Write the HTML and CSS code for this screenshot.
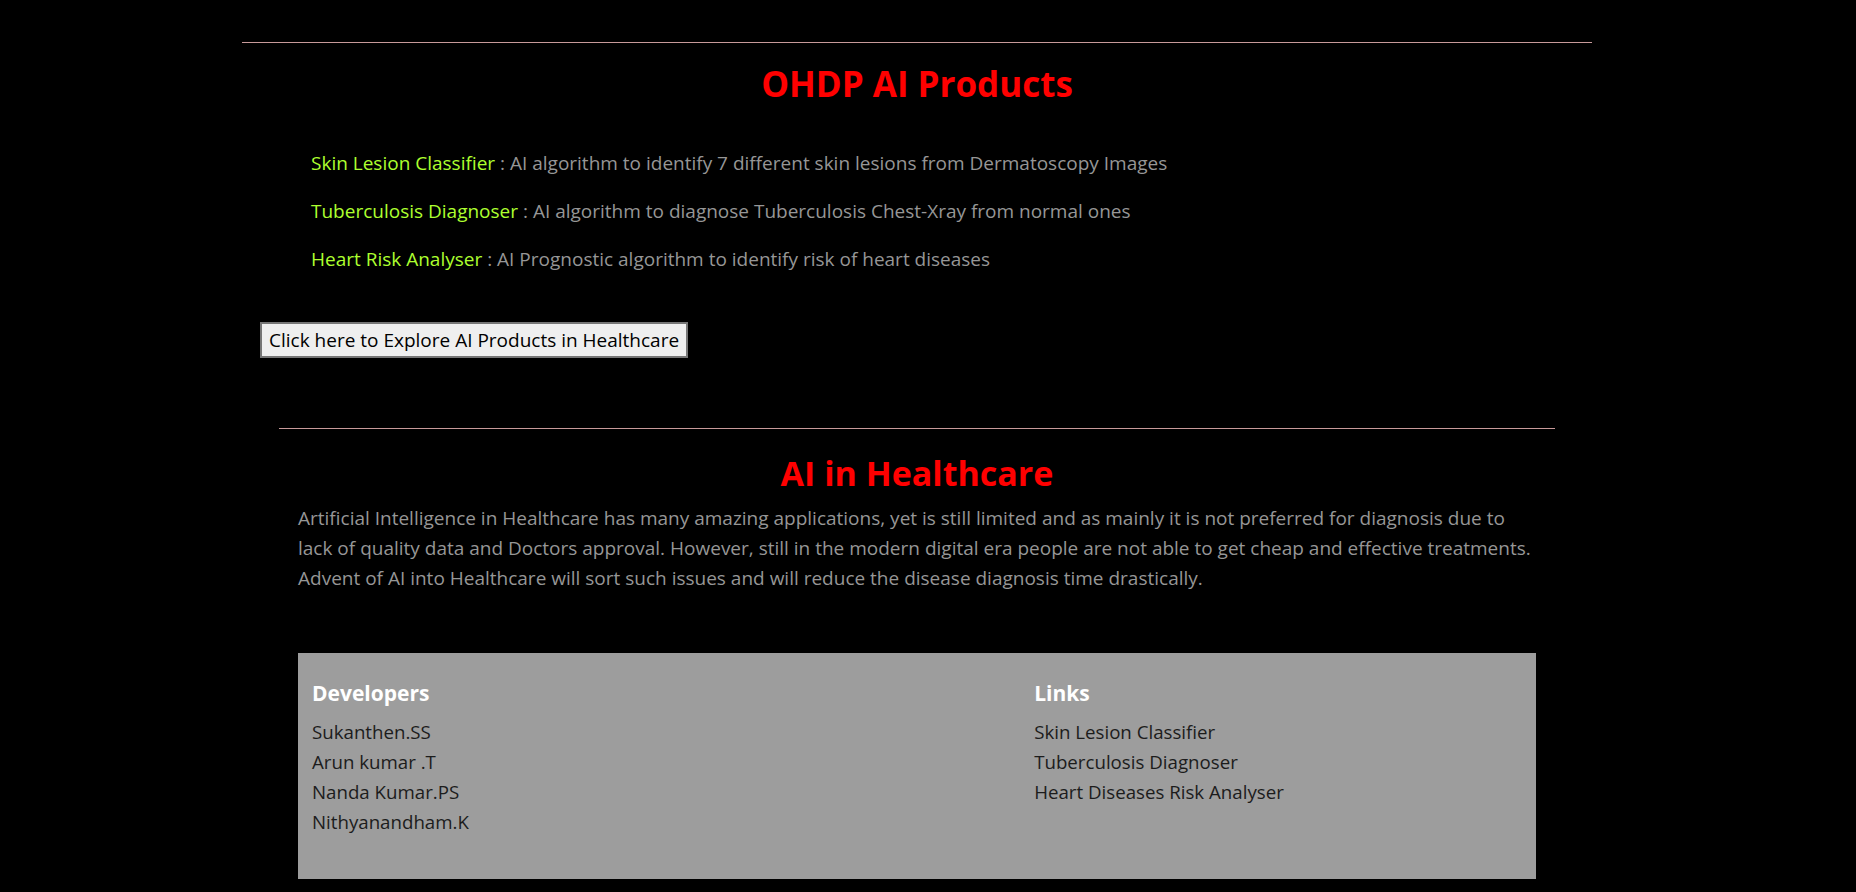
FILE: index.html
```html
<!DOCTYPE html>
<html lang="en">
<head>
<meta charset="utf-8">
<title>OHDP AI Products</title>
<link rel="stylesheet" href="styles.css">
</head>
<body>
<main class="page">
  <section class="products">
    <hr class="rule">
    <h1 class="title">OHDP AI Products</h1>
    <ul class="product-list">
      <li><span class="product-name">Skin Lesion Classifier</span> : AI algorithm to identify 7 different skin lesions from Dermatoscopy Images</li>
      <li><span class="product-name">Tuberculosis Diagnoser</span> : AI algorithm to diagnose Tuberculosis Chest-Xray from normal ones</li>
      <li><span class="product-name">Heart Risk Analyser</span> : AI Prognostic algorithm to identify risk of heart diseases</li>
    </ul>
    <button class="explore-btn" type="button">Click here to Explore AI Products in Healthcare</button>
  </section>

  <section class="about">
    <hr class="rule">
    <h1 class="title title-lg">AI in Healthcare</h1>
    <p class="about-text">Artificial Intelligence in Healthcare has many amazing applications, yet is still limited and as mainly it is not preferred for diagnosis due to<br>lack of quality data and Doctors approval. However, still in the modern digital era people are not able to get cheap and effective treatments.<br>Advent of AI into Healthcare will sort such issues and will reduce the disease diagnosis time drastically.</p>

    <footer class="footer">
      <div class="footer-col footer-col-wide">
        <h3 class="footer-heading">Developers</h3>
        <ul class="footer-list">
          <li>Sukanthen.SS</li>
          <li>Arun kumar .T</li>
          <li>Nanda Kumar.PS</li>
          <li>Nithyanandham.K</li>
        </ul>
      </div>
      <div class="footer-col">
        <h3 class="footer-heading">Links</h3>
        <ul class="footer-list">
          <li>Skin Lesion Classifier</li>
          <li>Tuberculosis Diagnoser</li>
          <li>Heart Diseases Risk Analyser</li>
        </ul>
      </div>
    </footer>
  </section>
</main>
</body>
</html>
```
FILE: styles.css
```css
html, body {
  margin: 0;
  padding: 0;
  background: #000;
}

body {
  font-family: "Open Sans", "Noto Sans", sans-serif;
  color: #969696;
}

.page {
  width: 1350px;
  margin-left: 242px;
  padding-top: 42px;
}

.rule {
  margin: 0;
  border: 0;
  border-top: 1px solid #c89a9a;
  height: 0;
}

.title {
  margin: 21px 0 0;
  text-align: center;
  color: #f00;
  font-size: 35px;
  line-height: 40px;
  font-weight: 700;
}

.product-list {
  list-style: none;
  margin: 45px 0 0;
  padding: 0 0 0 69px;
  display: flex;
  flex-direction: column;
  gap: 20px;
  font-size: 19px;
  line-height: 28px;
}

.product-name {
  color: #adff2f;
}

.explore-btn {
  display: block;
  margin: 49px 0 0 18px;
  height: 36px;
  padding: 0 7px;
  background: #efefef;
  border: 2px solid #767676;
  border-radius: 0;
  color: #000;
  font-family: "Open Sans", "Noto Sans", sans-serif;
  font-size: 19px;
}

.about {
  margin: 70px 37px 0;
}

.title-lg {
  margin-top: 22px;
  font-size: 34px;
  line-height: 44px;
}

.about-text {
  margin: 8px 0 0 19px;
  font-size: 19px;
  line-height: 30px;
}

.footer {
  margin: 60px 19px 0;
  background: #9d9d9d;
  display: grid;
  grid-template-columns: 7fr 5fr;
  padding: 26px 0 42px;
}

.footer-col {
  padding: 0 14px;
}

.footer-heading {
  margin: 0;
  color: #fff;
  font-size: 21px;
  line-height: 28px;
  font-weight: 700;
}

.footer-list {
  list-style: none;
  margin: 10px 0 0;
  padding: 0;
  color: #1c1c1c;
  font-size: 18.7px;
  line-height: 30px;
}
```
